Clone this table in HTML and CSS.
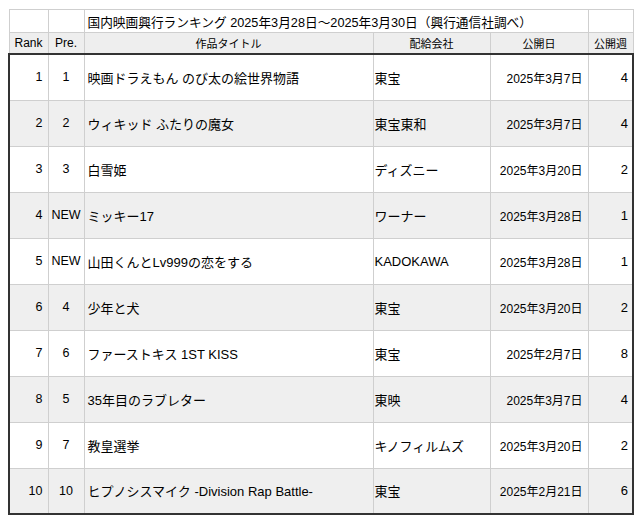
FILE: index.html
```html
<!DOCTYPE html>
<html lang="ja">
<head>
<meta charset="utf-8">
<link rel="stylesheet" href="styles.css">
</head>
<body>
<table class="rank-table">
  <colgroup>
    <col class="c-rank"><col class="c-pre"><col class="c-title"><col class="c-dist"><col class="c-date"><col class="c-week">
  </colgroup>
  <thead>
    <tr class="caption-row">
      <th></th><th></th>
      <th colspan="3" class="caption">国内映画興行ランキング 2025年3月28日〜2025年3月30日（興行通信社調べ）</th>
      <th></th>
    </tr>
    <tr class="head-row">
      <th class="latin">Rank</th><th class="latin">Pre.</th><th>作品タイトル</th><th>配給会社</th><th>公開日</th><th>公開週</th>
    </tr>
  </thead>
  <tbody>
    <tr><td class="num">1</td><td class="pre">1</td><td class="title">映画ドラえもん のび太の絵世界物語</td><td class="dist">東宝</td><td class="date">2025年3月7日</td><td class="week">4</td></tr>
    <tr><td class="num">2</td><td class="pre">2</td><td class="title">ウィキッド ふたりの魔女</td><td class="dist">東宝東和</td><td class="date">2025年3月7日</td><td class="week">4</td></tr>
    <tr><td class="num">3</td><td class="pre">3</td><td class="title">白雪姫</td><td class="dist">ディズニー</td><td class="date">2025年3月20日</td><td class="week">2</td></tr>
    <tr><td class="num">4</td><td class="pre">NEW</td><td class="title">ミッキー17</td><td class="dist">ワーナー</td><td class="date">2025年3月28日</td><td class="week">1</td></tr>
    <tr><td class="num">5</td><td class="pre">NEW</td><td class="title">山田くんとLv999の恋をする</td><td class="dist">KADOKAWA</td><td class="date">2025年3月28日</td><td class="week">1</td></tr>
    <tr><td class="num">6</td><td class="pre">4</td><td class="title">少年と犬</td><td class="dist">東宝</td><td class="date">2025年3月20日</td><td class="week">2</td></tr>
    <tr><td class="num">7</td><td class="pre">6</td><td class="title">ファーストキス 1ST KISS</td><td class="dist">東宝</td><td class="date">2025年2月7日</td><td class="week">8</td></tr>
    <tr><td class="num">8</td><td class="pre">5</td><td class="title">35年目のラブレター</td><td class="dist">東映</td><td class="date">2025年3月7日</td><td class="week">4</td></tr>
    <tr><td class="num">9</td><td class="pre">7</td><td class="title">教皇選挙</td><td class="dist">キノフィルムズ</td><td class="date">2025年3月20日</td><td class="week">2</td></tr>
    <tr><td class="num">10</td><td class="pre">10</td><td class="title">ヒプノシスマイク -Division Rap Battle-</td><td class="dist">東宝</td><td class="date">2025年2月21日</td><td class="week">6</td></tr>
  </tbody>
</table>
</body>
</html>
```
FILE: styles.css
```css
html, body {
  margin: 0;
  padding: 0;
  background: #ffffff;
}
body {
  padding: 9px 8px 0 8px;
  font-family: "Liberation Sans", "Noto Sans CJK JP", sans-serif;
  color: #000;
}
.rank-table {
  border-collapse: collapse;
  table-layout: fixed;
  width: 624px;
}
.c-rank { width: 39px; }
.c-pre { width: 36px; }
.c-title { width: 289px; }
.c-dist { width: 117px; }
.c-date { width: 98px; }
.c-week { width: 45px; }

.rank-table th,
.rank-table td {
  border: 1px solid #cfcfcf;
  padding: 0;
  vertical-align: middle;
  white-space: nowrap;
  overflow: hidden;
}
.caption-row th {
  height: 22px;
  background: #fff;
  font-weight: normal;
}
.caption {
  text-align: left;
  padding-left: 3px !important;
  font-size: 12.7px;
}
.head-row th {
  height: 20px;
  background: #eeeeee;
  font-weight: normal;
  font-size: 11px;
  text-align: center;
}
.head-row th.latin {
  font-size: 12px;
}
.rank-table tbody {
  border: 2px solid #333;
}
.rank-table tbody tr {
  height: 46px;
}
.rank-table tbody tr:nth-child(even) td {
  background: #efefef;
}
.num {
  text-align: right;
  padding-right: 5px !important;
  font-size: 12.5px;
}
.pre {
  text-align: center;
  font-size: 12.5px;
}
.title {
  padding-left: 3px !important;
  font-size: 13px;
}
.dist {
  padding-left: 1px !important;
  font-size: 13px;
}
.date {
  text-align: right;
  padding-right: 5px !important;
  font-size: 12px;
}
.week {
  text-align: right;
  padding-right: 4px !important;
  font-size: 13px;
}
```
